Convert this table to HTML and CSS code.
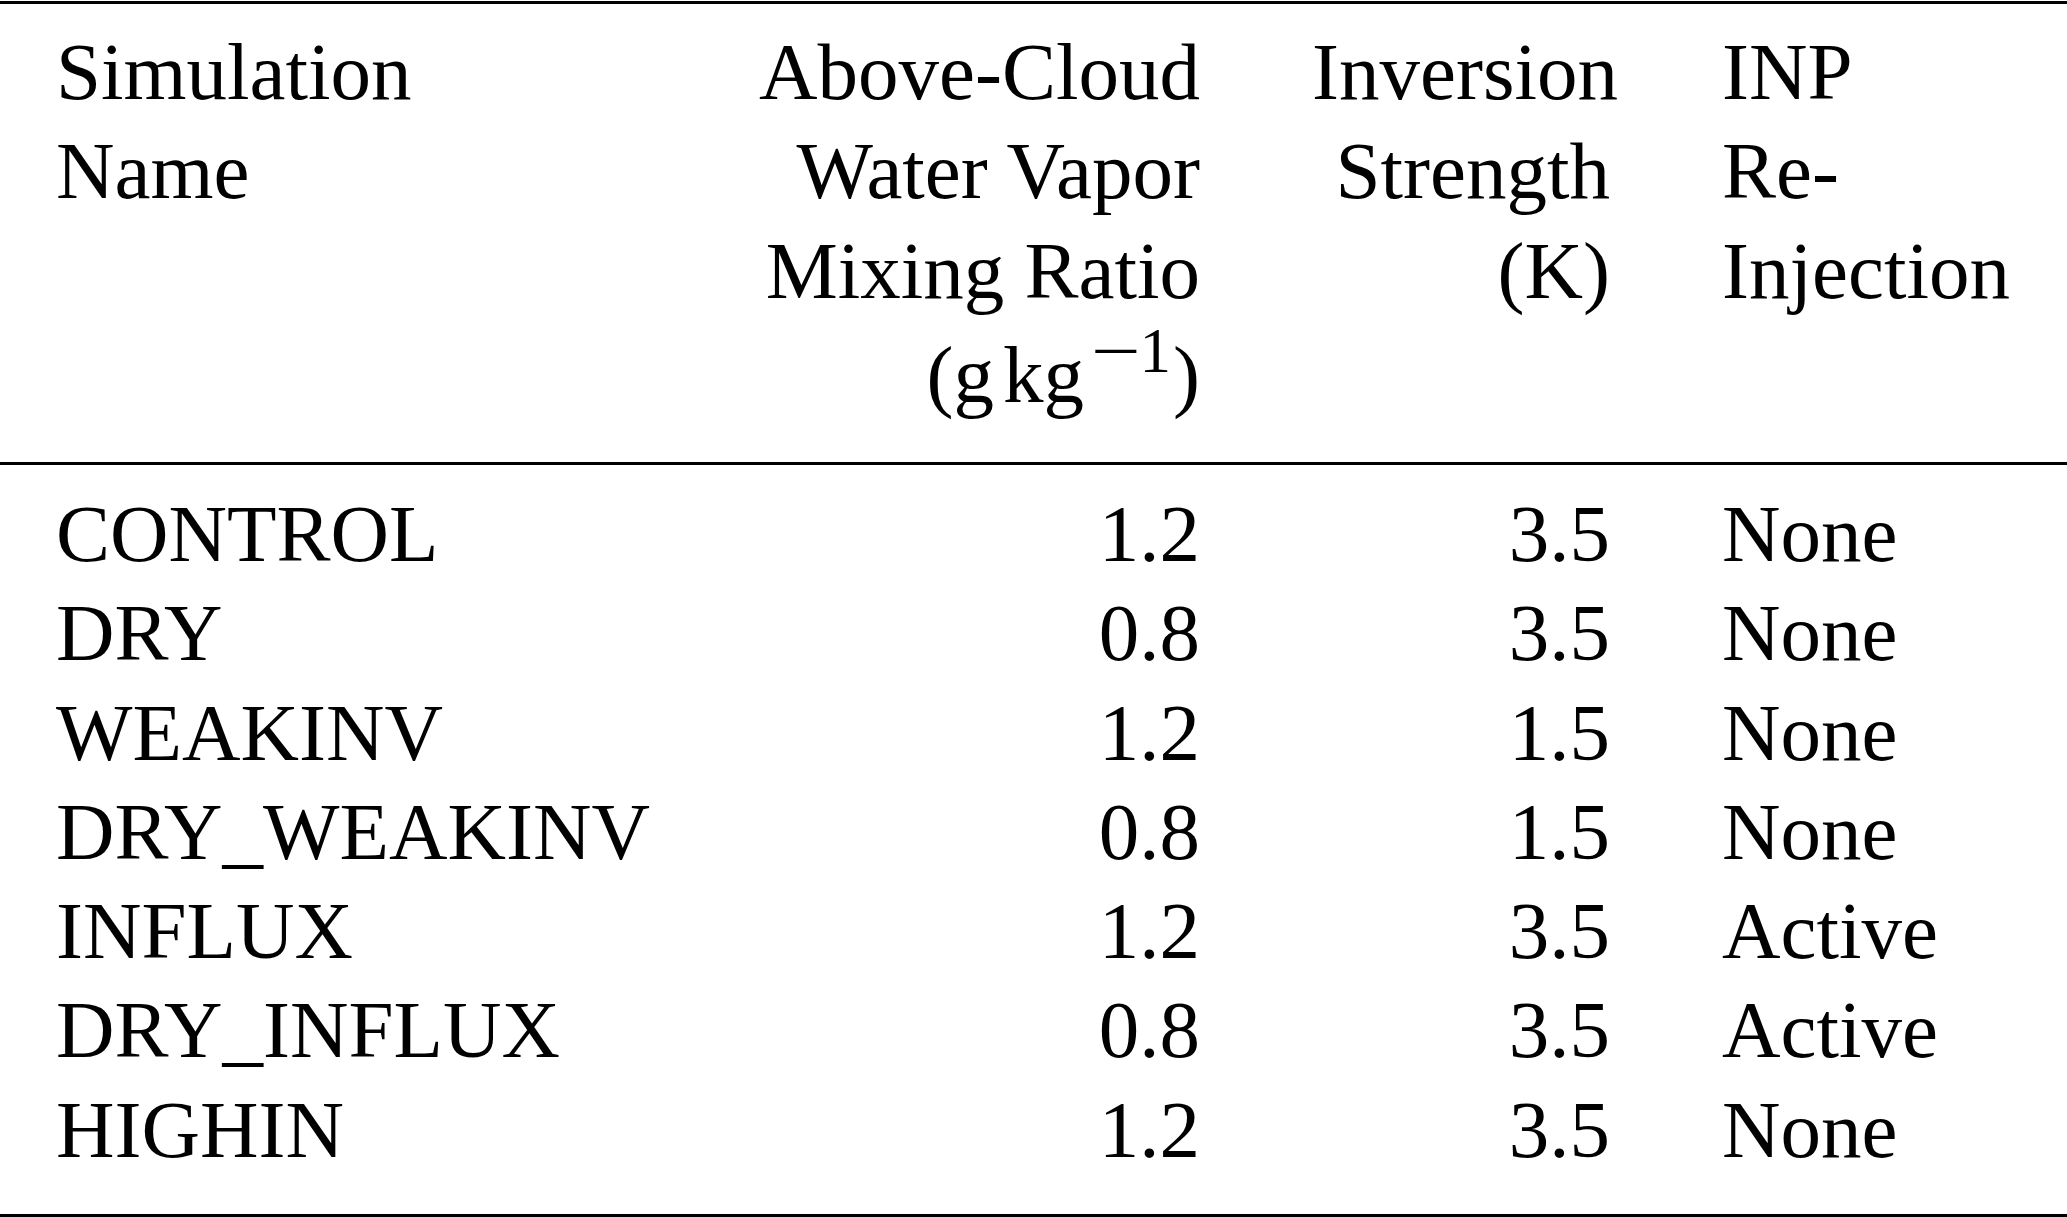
FILE: index.html
```html
<!DOCTYPE html>
<html lang="en">
<head>
<meta charset="utf-8">
<title>Simulations</title>
<link rel="stylesheet" href="styles.css">
</head>
<body>
<table class="sim-table">
  <colgroup>
    <col class="c1"><col class="c2"><col class="c3"><col class="c4">
  </colgroup>
  <thead>
    <tr>
      <th class="left">Simulation<br>Name</th>
      <th class="right">Above-Cloud<br>Water Vapor<br>Mixing Ratio<span class="units">(g<span class="thin"></span>kg<sup class="exp"><span class="minus">−</span>1</sup>)</span></th>
      <th class="right">Inversion<br>Strength<br>(K)</th>
      <th class="left">INP<br>Re-<br>Injection</th>
    </tr>
  </thead>
  <tbody>
    <tr><td class="left">CONTROL</td><td class="right">1.2</td><td class="right">3.5</td><td class="left">None</td></tr>
    <tr><td class="left">DRY</td><td class="right">0.8</td><td class="right">3.5</td><td class="left">None</td></tr>
    <tr><td class="left">WEAKINV</td><td class="right">1.2</td><td class="right">1.5</td><td class="left">None</td></tr>
    <tr><td class="left">DRY_WEAKINV</td><td class="right">0.8</td><td class="right">1.5</td><td class="left">None</td></tr>
    <tr><td class="left">INFLUX</td><td class="right">1.2</td><td class="right">3.5</td><td class="left">Active</td></tr>
    <tr><td class="left">DRY_INFLUX</td><td class="right">0.8</td><td class="right">3.5</td><td class="left">Active</td></tr>
    <tr><td class="left">HIGHIN</td><td class="right">1.2</td><td class="right">3.5</td><td class="left">None</td></tr>
  </tbody>
</table>
</body>
</html>
```

FILE: styles.css
```css
html, body {
  margin: 0;
  padding: 0;
  background: #ffffff;
}

body {
  color: #000000;
  font-family: "Liberation Serif", "Times New Roman", serif;
  font-size: 81px;
  line-height: 99.3px;
}

.sim-table {
  width: 2067px;
  margin-top: 1px;
  table-layout: fixed;
  border-collapse: separate;
  border-spacing: 0;
}

.sim-table col.c1 { width: 672px; }
.sim-table col.c2 { width: 584px; }
.sim-table col.c3 { width: 410px; }
.sim-table col.c4 { width: 401px; }

.sim-table th,
.sim-table td {
  padding: 0 56px;
  font-weight: normal;
  vertical-align: top;
  white-space: nowrap;
  overflow: visible;
}

.sim-table .left { text-align: left; }
.sim-table .right { text-align: right; }

.sim-table thead th {
  border-top: 3px solid #000;
  border-bottom: 3px solid #000;
  padding-top: 19px;
  padding-bottom: 36.8px;
}

.sim-table tbody tr:first-child td {
  padding-top: 20px;
}

.sim-table tbody tr:last-child td {
  padding-bottom: 33.9px;
  border-bottom: 3px solid #000;
}

.units {
  display: block;
  padding-top: 5px;
}

.thin {
  display: inline-block;
  width: 9px;
}

.exp {
  font-size: 63px;
  line-height: 0;
  vertical-align: 30px;
  margin-left: 8px;
  margin-right: 2px;
}

.minus {
  display: inline-block;
  transform: scaleX(1.4);
  margin: 0 6px;
}
```
